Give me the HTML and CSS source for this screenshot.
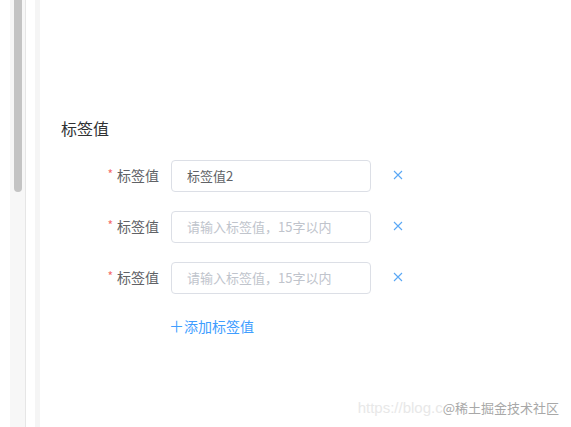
FILE: index.html
```html
<!DOCTYPE html>
<html lang="zh-CN">
<head>
    <meta charset="UTF-8">
    <title>标签值</title>
    <link rel="stylesheet" href="styles.css">
</head>
<body>

<div class="page">
    <div class="scroll-track">
        <div class="scroll-thumb"></div>
    </div>
    <div class="gap"></div>
    <div class="side-strip"></div>

    <div class="content">
        <h3 class="section-title">标签值</h3>

        <div class="form-item">
            <label class="item-label"><span class="required">*</span>标签值</label>
            <input class="item-input" type="text" value="标签值2">
            <span class="remove">
                <svg width="10" height="10" viewBox="0 0 10 10"><path d="M1 1L9 9M9 1L1 9" stroke="#5aa8f5" stroke-width="1.1" fill="none"/></svg>
            </span>
        </div>

        <div class="form-item">
            <label class="item-label"><span class="required">*</span>标签值</label>
            <input class="item-input" type="text" placeholder="请输入标签值，15字以内">
            <span class="remove">
                <svg width="10" height="10" viewBox="0 0 10 10"><path d="M1 1L9 9M9 1L1 9" stroke="#5aa8f5" stroke-width="1.1" fill="none"/></svg>
            </span>
        </div>

        <div class="form-item">
            <label class="item-label"><span class="required">*</span>标签值</label>
            <input class="item-input" type="text" placeholder="请输入标签值，15字以内">
            <span class="remove">
                <svg width="10" height="10" viewBox="0 0 10 10"><path d="M1 1L9 9M9 1L1 9" stroke="#5aa8f5" stroke-width="1.1" fill="none"/></svg>
            </span>
        </div>

        <a class="add-link" href="#"><span class="plus">＋</span>添加标签值</a>
    </div>

    <div class="watermark"><span class="mark-url">https://blog.c</span><span class="mark-brand">@稀土掘金技术社区</span></div>
</div>

</body>
</html>
```

FILE: styles.css
```css
* {
    margin: 0;
    padding: 0;
    box-sizing: border-box;
    font-family: "Noto Sans CJK SC", "Liberation Sans", sans-serif;
}

body {
    background: #ffffff;
    width: 571px;
    height: 427px;
    overflow: hidden;
}

.page {
    display: flex;
    height: 427px;
    padding-left: 10px;
    position: relative;
}

.scroll-track {
    width: 16px;
    height: 100%;
    background: #f7f7f7;
    border-right: 1px solid #e6e6e6;
    padding: 0 3px 0 4px;
}

.scroll-thumb {
    height: 192px;
    background: #c4c4c4;
    border-radius: 0 0 4px 4px;
}

.gap {
    width: 9px;
}

.side-strip {
    width: 5px;
    background: #f5f5f5;
}

.content {
    flex: 1;
    padding: 117px 0 0 21px;
}

.section-title {
    font-size: 16px;
    font-weight: normal;
    color: #303133;
    line-height: 22px;
    margin-bottom: 21px;
}

.form-item {
    display: flex;
    align-items: center;
    height: 32px;
    margin-bottom: 19px;
}

.item-label {
    width: 110px;
    padding-right: 12px;
    text-align: right;
    font-size: 14px;
    line-height: 20px;
    color: #606266;
    margin-top: -3px;
}

.required {
    color: #f56c6c;
    font-size: 12px;
    margin-right: 4px;
    vertical-align: 2px;
}

.item-input {
    width: 200px;
    height: 32px;
    border: 1px solid #dcdfe6;
    border-radius: 4px;
    padding: 0 15px 2px;
    font-size: 13px;
    color: #606266;
    outline: none;
}

.item-input::placeholder {
    color: #c0c4cc;
}

.remove {
    display: flex;
    margin-left: 22px;
    margin-top: -2px;
}

.add-link {
    display: inline-flex;
    align-items: center;
    margin: -4px 0 0 110px;
    font-size: 14px;
    color: #409eff;
    text-decoration: none;
}

.plus {
    font-size: 15px;
    margin-left: -2px;
}

.watermark {
    position: absolute;
    right: 12px;
    bottom: 11px;
    display: flex;
    align-items: flex-end;
    font-size: 13px;
    line-height: 17px;
}

.mark-url {
    color: #e8e8e8;
    font-family: "Liberation Sans", sans-serif;
    font-size: 15px;
    white-space: nowrap;
}

.mark-brand {
    color: #a8a8a8;
    font-family: "Noto Sans CJK SC", sans-serif;
}
```
